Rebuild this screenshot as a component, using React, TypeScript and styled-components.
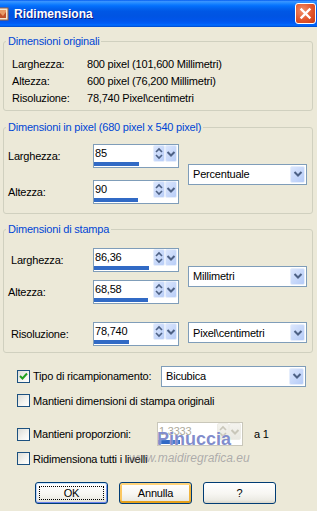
import React from 'react';
import styled, { createGlobalStyle } from 'styled-components';

const Global = createGlobalStyle`
  html, body { margin: 0; padding: 0; }
  body {
    background: #ECE9D8;
    font-family: "Liberation Sans", Arial, sans-serif;
    font-size: 11px;
    letter-spacing: -0.2px;
    color: #000;
    overflow: hidden;
  }
  * { box-sizing: border-box; }
`;

const Window = styled.div`
  width: 317px;
  height: 511px;
  background: #ECE9D8;
  position: relative;
  overflow: hidden;
`;

const TitleBar = styled.div`
  height: 27px;
  display: flex;
  align-items: center;
  background: linear-gradient(
    to bottom,
    #0058ee 0%,
    #3a93ff 5%,
    #288eff 10%,
    #127dff 16%,
    #036ffc 22%,
    #0262ee 32%,
    #0057e5 42%,
    #0054e3 60%,
    #0055eb 76%,
    #005bf5 86%,
    #026afe 92%,
    #0062ef 96%,
    #0043c4 100%
  );
`;

const TitleIcon = styled.svg`
  width: 16px;
  height: 16px;
  margin-left: -7px;
  margin-right: 5px;
  flex-shrink: 0;
`;

const TitleText = styled.div`
  color: #fff;
  font-weight: bold;
  font-size: 12px;
  letter-spacing: 0;
  text-shadow: 1px 1px 0 #0a1883;
`;

const CloseButton = styled.div`
  margin-left: auto;
  margin-right: 1px;
  width: 21px;
  height: 21px;
  border: 1px solid #fff;
  border-radius: 3px;
  background: radial-gradient(circle at 35% 35%, #f2906b 0%, #e2552b 55%, #c53a17 100%);
  display: flex;
  align-items: center;
  justify-content: center;
`;

const Group = styled.fieldset<{ $mt: number }>`
  margin: ${(p) => p.$mt}px 4px 0 3px;
  padding: 0;
  border: 1px solid #d0d0bf;
  border-radius: 3px;
  min-width: 0;
`;

const Legend = styled.legend`
  margin-left: 2px;
  padding: 0 2px;
  color: #0046d5;
  font-size: 11px;
  line-height: 13px;
`;

const InfoGrid = styled.div`
  display: grid;
  grid-template-columns: 75px 1fr;
  grid-auto-rows: 17px;
  align-items: center;
  padding: 7px 0 4px 8px;
`;

const FieldGrid = styled.div<{ $pt: number; $pb: number; $gap: number }>`
  display: grid;
  grid-template-columns: 85px 86px 119px;
  grid-auto-rows: 24px;
  row-gap: ${(p) => p.$gap}px;
  align-items: center;
  padding: ${(p) => p.$pt}px 0 ${(p) => p.$pb}px 4px;
`;

const Label = styled.div<{ $indent?: number }>`
  padding-left: ${(p) => p.$indent ?? 0}px;
  white-space: nowrap;
`;

const SpinBox = styled.div<{ $disabled?: boolean }>`
  width: 86px;
  height: 24px;
  border: 1px solid ${(p) => (p.$disabled ? '#c9c7ba' : '#7f9db9')};
  background: #fff;
  display: flex;
  flex-direction: column;
`;

const SpinTop = styled.div`
  height: 17px;
  display: flex;
  align-items: stretch;
  padding-right: 1px;
`;

const SpinValue = styled.div<{ $disabled?: boolean }>`
  flex: 1;
  line-height: 17px;
  padding-left: 1px;
  color: ${(p) => (p.$disabled ? '#aca899' : '#000')};
`;

const SpinBtn = styled.div<{ $disabled?: boolean }>`
  width: 12px;
  height: 17px;
  border: 1px solid ${(p) => (p.$disabled ? '#eeede6' : '#e6eefc')};
  border-radius: 2px;
  background: ${(p) =>
    p.$disabled
      ? 'linear-gradient(to bottom, #f4f3ee, #e9e8e1)'
      : 'linear-gradient(to bottom right, #dbe6fd, #b8cdf7)'};
  display: flex;
  align-items: center;
  justify-content: center;
`;

const BarTrack = styled.div`
  height: 5px;
  padding: 0 0 1px 0;
`;

const Bar = styled.div`
  height: 4px;
  background: #316ac5;
`;

const Combo = styled.div<{ $w: number; $align?: string; $ml?: number }>`
  width: ${(p) => p.$w}px;
  height: 21px;
  margin-left: ${(p) => p.$ml ?? 0}px;
  border: 1px solid #7f9db9;
  background: #fff;
  display: flex;
  align-items: center;
  padding: 1px;
  align-self: ${(p) => p.$align ?? 'center'};
`;

const ComboCell = styled.div<{ $span: number; $align?: string }>`
  grid-column: 3;
  grid-row: 1 / span ${(p) => p.$span};
  align-self: ${(p) => p.$align ?? 'center'};
  padding-left: 9px;
`;

const ComboText = styled.div`
  flex: 1;
  padding-left: 3px;
  white-space: nowrap;
`;

const ComboBtn = styled.div`
  width: 15px;
  height: 17px;
  border: 1px solid #e6eefc;
  border-radius: 2px;
  background: linear-gradient(to bottom right, #dbe6fd, #b5cbf7);
  display: flex;
  align-items: center;
  justify-content: center;
`;

const Options = styled.div`
  display: flex;
  flex-direction: column;
`;

const OptionRow = styled.div<{ $mt: number; $h: number }>`
  display: flex;
  align-items: center;
  height: ${(p) => p.$h}px;
  margin-top: ${(p) => p.$mt}px;
  padding-left: 17px;
`;

const CheckItem = styled.div<{ $w?: number }>`
  display: flex;
  align-items: center;
  gap: 3px;
  width: ${(p) => (p.$w ? `${p.$w}px` : 'auto')};
  flex-shrink: 0;
  white-space: nowrap;
`;

const Check = styled.div`
  width: 13px;
  height: 13px;
  border: 1px solid #1c5180;
  background: linear-gradient(135deg, #dcdcd7 0%, #f5f5f1 60%, #ffffff 100%);
  display: flex;
  align-items: center;
  justify-content: center;
  flex-shrink: 0;
`;

const Suffix = styled.div`
  margin-left: 11px;
`;

const ButtonRow = styled.div`
  display: flex;
  gap: 11px;
  padding-left: 35px;
  margin-top: 15px;
`;

const Button = styled.div<{ $kind: 'default' | 'hover' | 'plain' }>`
  width: 73px;
  height: 22px;
  border: 1px solid #003c74;
  border-radius: 3px;
  background: linear-gradient(to bottom, #ffffff 0%, #f7f6f2 55%, #ecebe4 85%, #d8d5c9 100%);
  display: flex;
  align-items: center;
  justify-content: center;
  position: relative;
  box-shadow: ${(p) =>
    p.$kind === 'default'
      ? 'inset 0 1px 0 #cee7ff, inset 0 -1px 0 #6982ee, inset 1px 0 0 #b9d1fa, inset -1px 0 0 #7d99f1'
      : p.$kind === 'hover'
      ? 'inset 0 2px 0 #ffd37a, inset 0 -2px 0 #e5a01a, inset 2px 0 0 #fbc761, inset -2px 0 0 #f0b43c'
      : 'none'};
`;

const FocusRing = styled.div`
  position: absolute;
  inset: 3px;
  border: 1px dotted #000;
`;

const Watermark = styled.div`
  position: absolute;
  left: 157px;
  top: 429px;
  font-family: "Liberation Sans", Arial, sans-serif;
  font-weight: bold;
  font-size: 18px;
  line-height: 20px;
  letter-spacing: 0;
  color: rgba(95, 110, 190, 0.8);
  text-shadow: 0 0 1px #fff;
  pointer-events: none;
`;

const WatermarkUrl = styled.div`
  position: absolute;
  left: 129px;
  top: 451px;
  font-family: "Liberation Sans", Arial, sans-serif;
  font-style: italic;
  font-size: 12px;
  line-height: 14px;
  letter-spacing: 0;
  color: rgba(130, 130, 140, 0.6);
  pointer-events: none;
`;

const UpDown = ({ disabled }: { disabled?: boolean }) => (
  <svg width="10" height="15" viewBox="0 0 10 15">
    <path d="M2 6 L5 3 L8 6" stroke={disabled ? '#c9c7ba' : '#4d6185'} strokeWidth="1.6" fill="none" />
    <path d="M2 9 L5 12 L8 9" stroke={disabled ? '#c9c7ba' : '#4d6185'} strokeWidth="1.6" fill="none" />
  </svg>
);

const Chevron = ({ disabled }: { disabled?: boolean }) => (
  <svg width="10" height="10" viewBox="0 0 10 10">
    <path d="M1.5 3 L5 6.5 L8.5 3" stroke={disabled ? '#c9c7ba' : '#4d6185'} strokeWidth="2" fill="none" />
  </svg>
);

const Spin = ({ value, bar, disabled }: { value: string; bar: number; disabled?: boolean }) => (
  <SpinBox $disabled={disabled}>
    <SpinTop>
      <SpinValue $disabled={disabled}>{value}</SpinValue>
      <SpinBtn $disabled={disabled}>
        <UpDown disabled={disabled} />
      </SpinBtn>
      <SpinBtn $disabled={disabled}>
        <Chevron disabled={disabled} />
      </SpinBtn>
    </SpinTop>
    <BarTrack>
      <Bar style={{ width: `${bar}px` }} />
    </BarTrack>
  </SpinBox>
);

const Select = ({ text, w, ml }: { text: string; w: number; ml?: number }) => (
  <Combo $w={w} $ml={ml}>
    <ComboText>{text}</ComboText>
    <ComboBtn>
      <Chevron />
    </ComboBtn>
  </Combo>
);

const CheckBox = ({ checked }: { checked?: boolean }) => (
  <Check>
    {checked && (
      <svg width="9" height="9" viewBox="0 0 9 9">
        <path d="M1 4 L3.5 6.5 L8 1.5" stroke="#21a121" strokeWidth="2" fill="none" />
      </svg>
    )}
  </Check>
);

export default function App() {
  return (
    <Window>
      <Global />
      <TitleBar>
        <TitleIcon viewBox="0 0 16 16">
          <rect x="1" y="2" width="14" height="12" fill="#f4e6d0" stroke="#a0603a" />
          <rect x="3" y="4" width="10" height="8" fill="#e89a66" />
          <path d="M3 12 L7 7 L10 10 L13 6 L13 12 Z" fill="#c0502a" />
        </TitleIcon>
        <TitleText>Ridimensiona</TitleText>
        <CloseButton>
          <svg width="13" height="13" viewBox="0 0 13 13">
            <path d="M2.5 2.5 L10.5 10.5 M10.5 2.5 L2.5 10.5" stroke="#fff" strokeWidth="2.4" strokeLinecap="square" />
          </svg>
        </CloseButton>
      </TitleBar>

      <Group $mt={8}>
        <Legend>Dimensioni originali</Legend>
        <InfoGrid>
          <Label>Larghezza:</Label>
          <Label>800 pixel (101,600 Millimetri)</Label>
          <Label>Altezza:</Label>
          <Label>600 pixel (76,200 Millimetri)</Label>
          <Label>Risoluzione:</Label>
          <Label>78,740 Pixel\centimetri</Label>
        </InfoGrid>
      </Group>

      <Group $mt={10}>
        <Legend>Dimensioni in pixel (680 pixel x 540 pixel)</Legend>
        <FieldGrid $pt={10} $pb={9} $gap={12}>
          <Label>Larghezza:</Label>
          <Spin value="85" bar={45} />
          <ComboCell $span={2}>
            <Select text="Percentuale" w={119} />
          </ComboCell>
          <Label>Altezza:</Label>
          <Spin value="90" bar={44} />
        </FieldGrid>
      </Group>

      <Group $mt={9}>
        <Legend>Dimensioni di stampa</Legend>
        <FieldGrid $pt={12} $pb={0} $gap={8}>
          <Label $indent={3}>Larghezza:</Label>
          <Spin value="86,36" bar={55} />
          <ComboCell $span={2}>
            <Select text="Millimetri" w={119} />
          </ComboCell>
          <Label>Altezza:</Label>
          <Spin value="68,58" bar={54} />
        </FieldGrid>
        <FieldGrid $pt={18} $pb={6} $gap={0}>
          <Label $indent={3}>Risoluzione:</Label>
          <Spin value="78,740" bar={35} />
          <ComboCell $span={1} $align="start">
            <Select text="Pixel\centimetri" w={119} />
          </ComboCell>
        </FieldGrid>
      </Group>

      <Options>
        <OptionRow $mt={12} $h={22}>
          <CheckItem $w={144}>
            <CheckBox checked />
            <span>Tipo di ricampionamento:</span>
          </CheckItem>
          <Select text="Bicubica" w={145} />
        </OptionRow>
        <OptionRow $mt={5} $h={17}>
          <CheckItem>
            <CheckBox />
            <span>Mantieni dimensioni di stampa originali</span>
          </CheckItem>
        </OptionRow>
        <OptionRow $mt={13} $h={24}>
          <CheckItem $w={140}>
            <CheckBox />
            <span>Mantieni proporzioni:</span>
          </CheckItem>
          <Spin value="1,3333" bar={22} disabled />
          <Suffix>a 1</Suffix>
        </OptionRow>
        <OptionRow $mt={4} $h={17}>
          <CheckItem>
            <CheckBox />
            <span>Ridimensiona tutti i livelli</span>
          </CheckItem>
        </OptionRow>
        <ButtonRow>
          <Button $kind="default">
            <FocusRing />
            OK
          </Button>
          <Button $kind="hover">Annulla</Button>
          <Button $kind="plain">?</Button>
        </ButtonRow>
      </Options>

      <Watermark>Pinuccia</Watermark>
      <WatermarkUrl>www.maidiregrafica.eu</WatermarkUrl>
    </Window>
  );
}
